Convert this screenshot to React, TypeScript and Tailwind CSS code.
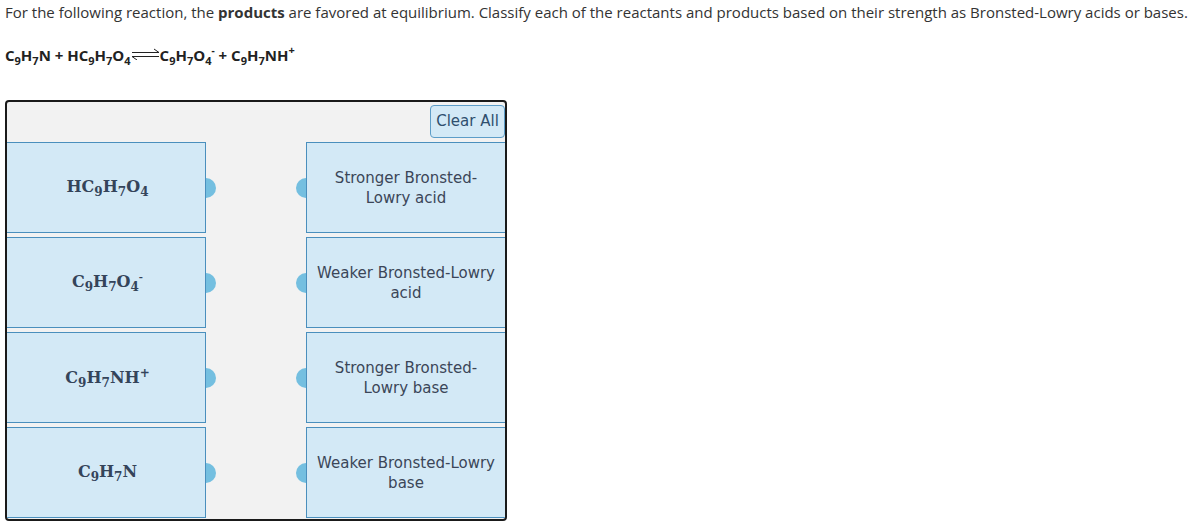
import React from "react";

const Sub = ({ c, cls = "text-[11px] align-[-4px]" }: { c: string; cls?: string }) => (
  <span className={cls}>{c}</span>
);

function Arrow() {
  return (
    <svg width="29" height="12" viewBox="0 0 29 12" className="inline-block align-[1px]">
      <line x1="1" y1="4.5" x2="28" y2="4.5" stroke="#222" strokeWidth="1" />
      <line x1="28" y1="4.5" x2="23" y2="1" stroke="#222" strokeWidth="1" />
      <line x1="1" y1="8.5" x2="28" y2="8.5" stroke="#222" strokeWidth="1" />
      <line x1="1" y1="8.5" x2="6" y2="12" stroke="#222" strokeWidth="1" />
    </svg>
  );
}

const serif = { fontFamily: '"DejaVu Serif", "Liberation Serif", serif' };
const sans = { fontFamily: '"DejaVu Sans", Verdana, sans-serif' };

function Row({ formula, label }: { formula: React.ReactNode; label: string }) {
  return (
    <div className="flex items-center justify-between">
      <div className="flex items-center">
        <div className="w-[199px] h-[91px] bg-[#d3e9f6] border border-l-0 border-[#4a8fbd] flex items-center justify-center">
          <div className="text-[#34445a] font-bold text-[16px] pl-[3px]" style={serif}>
            {formula}
          </div>
        </div>
        <div className="w-[10px] h-[20px] rounded-r-full bg-[#74bfe0]" />
      </div>
      <div className="flex items-center">
        <div className="w-[10px] h-[20px] rounded-l-full bg-[#74bfe0]" />
        <div className="w-[199px] h-[91px] bg-[#d3e9f6] border border-r-0 border-[#4a8fbd] flex items-center justify-center">
          <div className="max-w-[182px] text-[#3b4658] text-[15px] leading-[20px] text-center" style={sans}>
            {label}
          </div>
        </div>
      </div>
    </div>
  );
}

export default function App() {
  const bs = "text-[12px] align-[-4px]";
  const formulas: React.ReactNode[] = [
    <span>HC<Sub c="9" cls={bs} />H<Sub c="7" cls={bs} />O<Sub c="4" cls={bs} /></span>,
    <span>C<Sub c="9" cls={bs} />H<Sub c="7" cls={bs} />O<Sub c="4" cls={bs} /><span className="text-[10px] align-[7px]">-</span></span>,
    <span>C<Sub c="9" cls={bs} />H<Sub c="7" cls={bs} />NH<span className="text-[12px] align-[6px]">+</span></span>,
    <span>C<Sub c="9" cls={bs} />H<Sub c="7" cls={bs} />N</span>,
  ];
  const labels = [
    "Stronger Bronsted-Lowry acid",
    "Weaker Bronsted-Lowry acid",
    "Stronger Bronsted-Lowry base",
    "Weaker Bronsted-Lowry base",
  ];
  return (
    <div className="w-[1196px] h-[522px] bg-white overflow-hidden" style={{ fontFamily: '"Open Sans", sans-serif' }}>
      <p className="pl-[5px] pt-[1px] text-[15px] leading-[22px] text-[#333] whitespace-nowrap">
        For the following reaction, the <b>products</b> are favored at equilibrium. Classify each of the reactants and products based on their strength as Bronsted-Lowry acids or bases.
      </p>
      <div className="pl-[5px] mt-[17px] text-[15px] leading-[20px] font-bold text-[#222] whitespace-nowrap">
        C<Sub c="9" />H<Sub c="7" />N + HC<Sub c="9" />H<Sub c="7" />O<Sub c="4" />
        <Arrow />
        C<Sub c="9" />H<Sub c="7" />O<Sub c="4" /><span className="text-[10px] align-[7px]">-</span> + C<Sub c="9" />H<Sub c="7" />NH<span className="text-[11px] align-[7px]">+</span>
      </div>
      <div className="ml-[5px] mt-[29px] w-[502px] h-[421px] border-2 border-[#1a1a1a] rounded-[4px] bg-[#f2f2f2] overflow-hidden">
        <div className="flex justify-end pt-[3px]">
          <button
            className="w-[75px] h-[33px] rounded-[4px] border border-[#5d9dc8] bg-[#d3e9f6] text-[#2f4f6e] text-[15px]"
            style={sans}
          >
            Clear All
          </button>
        </div>
        <div className="mt-[4px] flex flex-col gap-[4px]">
          {formulas.map((f, i) => (
            <Row key={i} formula={f} label={labels[i]} />
          ))}
        </div>
      </div>
    </div>
  );
}
